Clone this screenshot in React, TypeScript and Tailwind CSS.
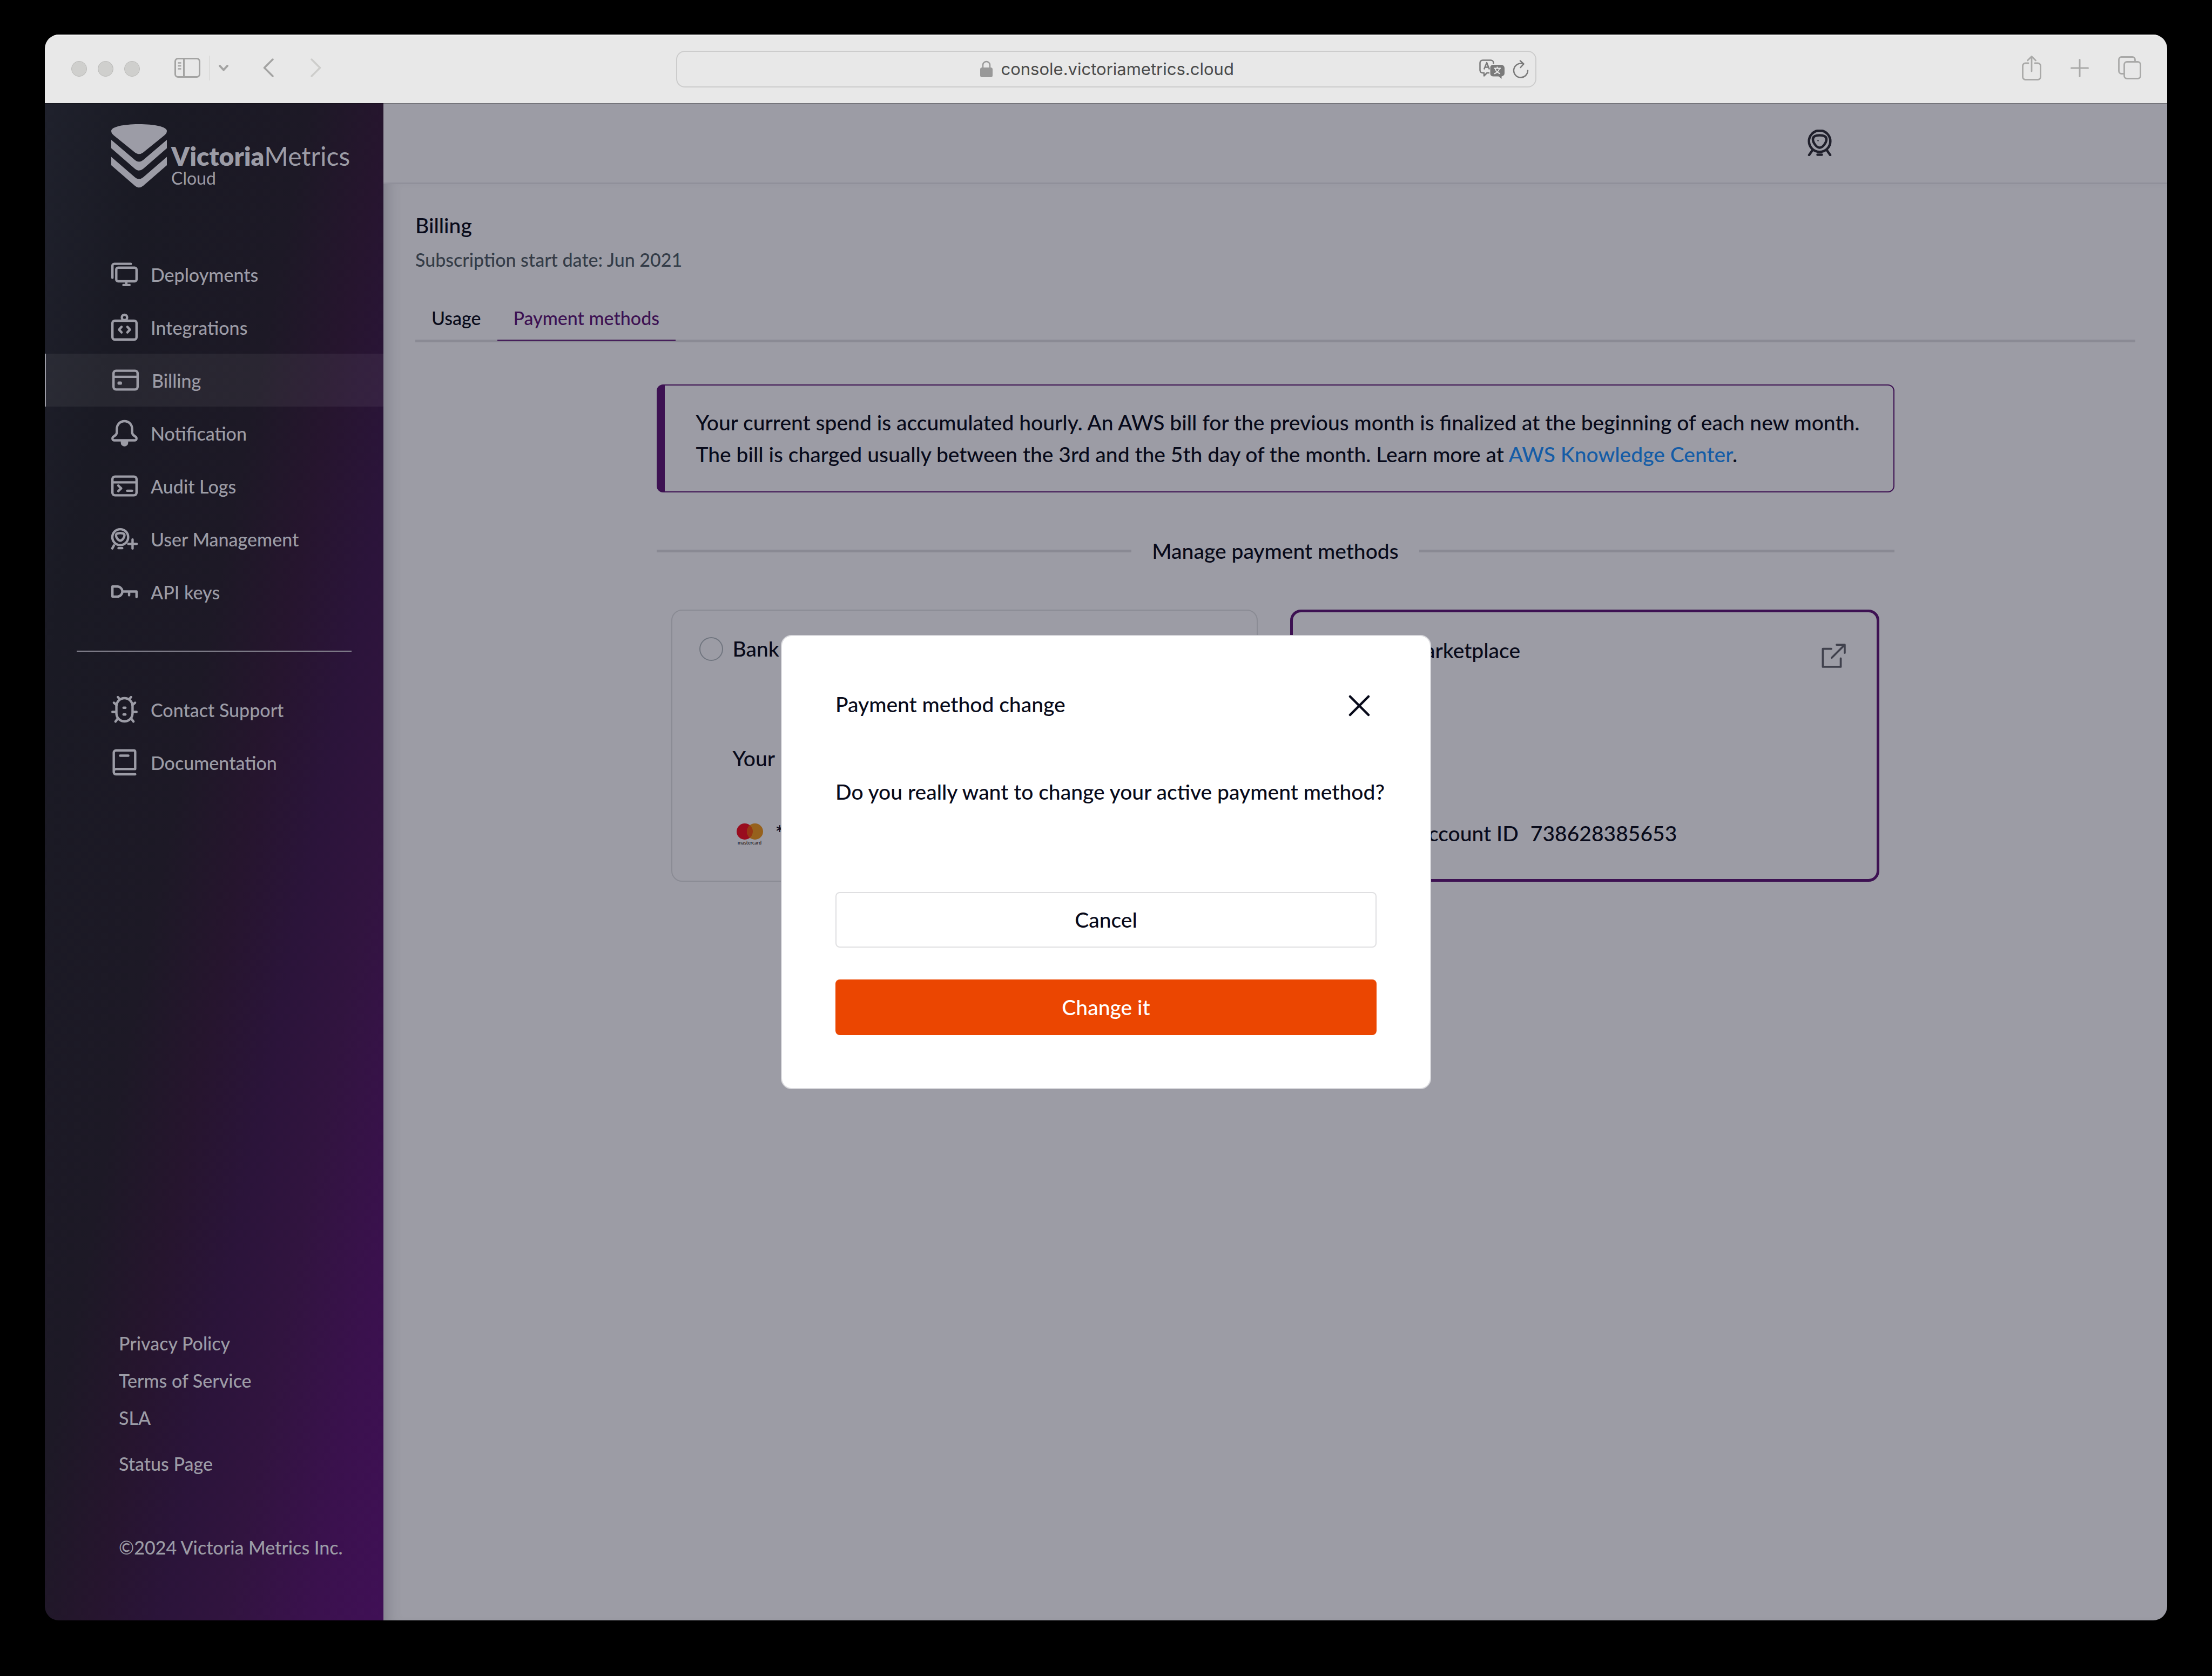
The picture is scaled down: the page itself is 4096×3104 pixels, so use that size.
import type { ReactNode } from "react";

function NavIcon({ children }: { children: ReactNode }) {
  return (
    <svg
      viewBox="0 0 20 20"
      className="size-[49px] shrink-0 overflow-visible"
      fill="none"
      stroke="currentColor"
      strokeWidth="1.8"
      strokeLinecap="round"
      strokeLinejoin="round"
      aria-hidden="true"
    >
      {children}
    </svg>
  );
}

const mainLinks = [
  {
    label: "Deployments",
    icon: (
      <>
        <path d="M.9 12.4V3.3A1.4 1.4 0 0 1 2.3 1.9H14.8" />
        <rect x="3.8" y="4.8" width="15.3" height="10.3" rx="1.4" />
        <path d="M11.4 15.4v2.4M9.2 17.9h4.6" />
      </>
    ),
  },
  {
    label: "Integrations",
    icon: (
      <>
        <rect x=".9" y="4.9" width="18.2" height="14.2" rx="1.7" />
        <circle cx="10" cy="2.4" r="2" />
        <path d="M7.8 9.5 5.9 11.6l1.9 2.1M12.2 9.5l1.9 2.1-1.9 2.1" />
      </>
    ),
  },
  {
    label: "Billing",
    active: true,
    icon: (
      <>
        <rect x=".9" y="2.7" width="18.2" height="14.2" rx="1.9" />
        <path d="M.9 7.3h18.2" />
        <rect x="3.9" y="10.8" width="3.4" height="2.5" rx=".9" fill="currentColor" stroke="none" />
      </>
    ),
  },
  {
    label: "Notification",
    icon: (
      <>
        <path d="M10 .8C6.6.8 4.2 3.4 4.2 6.8v2.6c0 2.2-2 2.5-3 3.6-.7.9-.2 2.3 1 2.3h15.6c1.2 0 1.7-1.4 1-2.3-1-1.1-3-1.4-3-3.6V6.8c0-3.4-2.4-6-5.8-6Z" />
        <path d="M7.2 15.8h5.6v1.3a2.8 2.8 0 0 1-5.6 0Z" fill="currentColor" stroke="none" />
      </>
    ),
  },
  {
    label: "Audit Logs",
    icon: (
      <>
        <rect x=".9" y="2.7" width="18.2" height="14.2" rx="1.9" />
        <path d="M.9 7.1h18.2M5.3 9.5l2.2 2.1-2.2 2.1M12 13.4h3.8" />
      </>
    ),
  },
  {
    label: "User Management",
    icon: (
      <>
        <circle cx="6.8" cy="8.5" r="6" />
        <path d="M6.8 5.4c1.7 0 3.2.3 3.2 1.6 0 1.6-1.6 4.1-3.2 4.1S3.6 8.6 3.6 7C3.6 5.7 5.1 5.4 6.8 5.4Z" />
        <path d="m2 14.8-1.2 2.2M5.5 16.8h2.8M16.1 10.3v6.8M12.9 13.6h6.3" />
      </>
    ),
  },
  {
    label: "API keys",
    icon: <path d="M.9 5.8h3.7a3.8 3.8 0 0 1 0 7.6H.9ZM8.6 9.6h10.5v4.2M13.5 9.6v2.8" />,
  },
];

const helpLinks = [
  {
    label: "Contact Support",
    icon: (
      <>
        <rect x="3.9" y="1.2" width="12.2" height="17.6" rx="6.1" />
        <path d="m5 .4 1.4 1.6M15 .4l-1.4 1.6M2 4.7l1.8 1.5M18 4.7l-1.8 1.5M.9 11.6h2.6M19.1 11.6h-2.6M3.2 18.9l1.5-2M16.8 18.9l-1.5-2M9.3 8.5h1.4M9.3 13.6h1.4" />
      </>
    ),
  },
  {
    label: "Documentation",
    icon: (
      <path d="M18.1 14.8V1.7a1 1 0 0 0-1-1H3.6A1.7 1.7 0 0 0 1.9 2.4v14.7a1.7 1.7 0 0 0 1.7 1.7h14.5M18.1 14.8H3.6a1.7 1.7 0 0 0-1.7 1.7M6.7 4.7h6.2" />
    ),
  },
];

type NavItem = { label: string; icon: ReactNode; active?: boolean };

function NavList({ items, label }: { items: NavItem[]; label: string }) {
  return (
    <nav aria-label={label} className="flex flex-col">
      {items.map((item) => (
        <a
          key={item.label}
          href="#"
          aria-current={item.active ? "page" : undefined}
          className={
            item.active
              ? "flex h-[98px] items-center gap-6 border-l-2 border-[#9c9ca6] bg-white/6 pl-[123px]"
              : "flex h-[98px] items-center gap-6 pl-[123px]"
          }
        >
          <NavIcon>{item.icon}</NavIcon>
          {item.label}
        </a>
      ))}
    </nav>
  );
}

function Toolbar() {
  return (
    <header className="relative z-10 grid h-[127px] grid-cols-[1fr_auto_1fr] items-center bg-[#e8e8e8] shadow-[0_2px_0_rgba(0,0,0,0.25),inset_0_2px_0_#f5f5f5]">
      <div className="flex items-center pl-[49px] text-[#a3a3a2]">
        <div className="flex gap-5">
          <span className="size-[29px] rounded-full border border-[#b9b9b7] bg-[#cfcfcd]" />
          <span className="size-[29px] rounded-full border border-[#b9b9b7] bg-[#cfcfcd]" />
          <span className="size-[29px] rounded-full border border-[#b9b9b7] bg-[#cfcfcd]" />
        </div>
        <div className="flex items-center pb-1">
          <button type="button" aria-label="Show sidebar" className="ml-16">
            <svg viewBox="0 0 48 37" className="h-[37px] w-12" fill="none" stroke="currentColor" strokeWidth="3">
              <rect x="1.5" y="1.5" width="45" height="34" rx="5" />
              <path d="M17.5 2v33" />
              <path d="M6.5 9.5h6M6.5 15h6M6.5 20.5h6" strokeWidth="2.5" />
            </svg>
          </button>
          <span className="ml-4 h-[46px] w-0.5 bg-[#dcdcdb]" />
          <button type="button" aria-label="Tab groups" className="ml-4">
            <svg viewBox="0 0 18 12" className="h-3 w-[18px]" fill="none" stroke="currentColor" strokeWidth="4" strokeLinecap="round" strokeLinejoin="round">
              <path d="m2 2 7 7.5L16 2" />
            </svg>
          </button>
          <button type="button" aria-label="Back" className="ml-16">
            <svg viewBox="0 0 20 35" className="h-[35px] w-5" fill="none" stroke="currentColor" strokeWidth="3.5" strokeLinecap="round" strokeLinejoin="round">
              <path d="M18 2 2.5 17.5 18 33" />
            </svg>
          </button>
          <button type="button" aria-label="Forward" className="ml-[68px] text-[#cdcdcb]">
            <svg viewBox="0 0 20 35" className="h-[35px] w-5" fill="none" stroke="currentColor" strokeWidth="3.5" strokeLinecap="round" strokeLinejoin="round">
              <path d="m2 2 15.5 15.5L2 33" />
            </svg>
          </button>
        </div>
      </div>

      <div className="relative flex h-[68px] w-[1593px] max-w-full items-center justify-center gap-4 rounded-2xl border-2 border-[#cccccc] pl-2">
        <svg viewBox="0 0 23 31" className="h-[31px] w-[23px] text-[#999999]" aria-hidden="true">
          <rect y="13" width="23" height="18" rx="3.5" fill="currentColor" />
          <path d="M5 14V8.5a6.5 6.5 0 0 1 13 0V14" fill="none" stroke="currentColor" strokeWidth="2.5" />
        </svg>
        <input
          type="text"
          aria-label="Address"
          defaultValue="console.victoriametrics.cloud"
          className="w-[436px] bg-transparent font-[Inter,sans-serif] text-[31px] leading-[40px] text-[#4a4a4a] outline-none"
        />
        <div className="absolute right-3 flex items-center gap-3.5 text-[#7a7a7a]">
          <button type="button" aria-label="Translate">
            <svg viewBox="0 0 48 36" className="h-9 w-12" fill="none" stroke="currentColor" strokeWidth="2.5" strokeLinejoin="round">
              <path d="M19 25h-4.500L9 30.500V25H6.500a5 5 0 0 1-5-5V6.500a5 5 0 0 1 5-5h15a5 5 0 0 1 5 5V8" />
              <path d="m9 18.500 5-12.500 5 12.500M10.800 14.500h6.400" />
              <path d="M25.500 10H41a6 6 0 0 1 6 6v9.500a6 6 0 0 1-5.500 6V36l-5.500-4.500H25.500a5 5 0 0 1-5-5V15a5 5 0 0 1 5-5Z" fill="currentColor" stroke="none" />
              <path d="M27 16.500h13M33.500 13.500v3M29.500 17c1 4 5 8 9.500 9.500M37.500 17c-1 4-5 8-9.500 9.500" stroke="#e8e8e8" strokeWidth="2" />
            </svg>
          </button>
          <button type="button" aria-label="Reload">
            <svg viewBox="0 0 30 34" className="h-[34px] w-[30px]" fill="none" stroke="currentColor" strokeWidth="2.5" strokeLinecap="round" strokeLinejoin="round">
              <path d="M19.5 7.3A13 13 0 1 0 28 19.5" />
              <path d="m14 1.5 6.5 6L14.5 14" />
            </svg>
          </button>
        </div>
      </div>

      <div className="flex items-center justify-end gap-[54px] pr-12 pb-1 text-[#a9a9a8]">
        <button type="button" aria-label="Share">
          <svg viewBox="0 0 36 46" className="h-[46px] w-9" fill="none" stroke="currentColor" strokeWidth="2.8" strokeLinecap="round" strokeLinejoin="round">
            <path d="M12 14H6.500a5 5 0 0 0-5 5v20.500a5 5 0 0 0 5 5h23a5 5 0 0 0 5-5V19a5 5 0 0 0-5-5H24" />
            <path d="M18 29V2M10.500 9 18 1.500 25.500 9" />
          </svg>
        </button>
        <button type="button" aria-label="New tab">
          <svg viewBox="0 0 34 34" className="size-[34px]" fill="none" stroke="currentColor" strokeWidth="3" strokeLinecap="round">
            <path d="M17 1.5v31M1.5 17h31" />
          </svg>
        </button>
        <button type="button" aria-label="Tab overview">
          <svg viewBox="0 0 43 43" className="size-[43px]" fill="none" stroke="currentColor" strokeWidth="2.8" strokeLinejoin="round">
            <rect x="11.5" y="10.5" width="30" height="31" rx="5" />
            <path d="M11 32.5H6.5a5 5 0 0 1-5-5v-21a5 5 0 0 1 5-5h20a5 5 0 0 1 5 5V10" />
          </svg>
        </button>
      </div>
    </header>
  );
}

function Sidebar() {
  return (
    <aside className="flex w-[627px] shrink-0 flex-col bg-[linear-gradient(101deg,#1f212c_0%,#1a1a24_18%,#1d1926_42%,#26152e_54%,#2b143a_65%,#31143f_75%,#3a114d_88%,#401056_100%)] text-[34px] leading-[51px] text-[#9c9ca6]">
      <div className="flex gap-2 pt-[39px] pl-[123px]">
        <svg viewBox="0 0 103 118" className="h-[118px] w-[103px]" fill="currentColor" aria-hidden="true">
          <path d="M0 12.500C0 4.500 24 0 51.500 0S103 4.500 103 12.500c0 3.500-2 6-5 8.500L59 52.500q-7.500 5.500-15 0L5 21C2 18.500 0 16 0 12.500Z" />
          <path d="M0 29l44 37.500q7.500 6 15 0L103 29v15.500L59 82.800q-7.500 6-15 0L0 44.500Z" />
          <path d="M0 60.500l44 38q7.500 6 15 0l44-38V76L59 114.300q-7.500 6-15 0L0 76Z" />
        </svg>
        <div className="flex flex-col pt-9 font-normal">
          <span className="text-[48px] leading-[46px]">
            <b className="font-extrabold">Victoria</b>Metrics
          </span>
          <span className="text-[32px] leading-[36px]">Cloud</span>
        </div>
      </div>
      <div className="mt-[111px]">
        <NavList items={mainLinks} label="Main" />
      </div>
      <hr className="mx-[59px] mt-[60px] mb-[58px] border-t-2 border-[#85838f]" />
      <NavList items={helpLinks} label="Help" />
      <div className="mt-auto flex flex-col items-start pb-[101px] pl-[137px] leading-[69px]">
        <a href="#">Privacy Policy</a>
        <a href="#">Terms of Service</a>
        <a href="#">SLA</a>
        <a href="#" className="mt-4">Status Page</a>
        <p className="mt-[86px]">©2024 Victoria Metrics Inc.</p>
      </div>
    </aside>
  );
}

function Mastercard() {
  return (
    <svg viewBox="0 0 62 46" className="h-[46px] w-[62px]" role="img" aria-label="mastercard">
      <circle cx="22" cy="19" r="15" fill="#990c1e" />
      <circle cx="41" cy="19" r="15" fill="#96611c" />
      <path d="M31.500 7.400a15 15 0 0 1 0 23.200 15 15 0 0 1 0-23.200Z" fill="#983614" />
      <text x="31" y="43" textAnchor="middle" fontSize="9" fill="#12131c" fontFamily="Lato, sans-serif">
        mastercard
      </text>
    </svg>
  );
}

function PaymentMethods() {
  return (
    <section className="mx-auto mt-[78px] w-full max-w-[2292px]">
      <div className="rounded-xl border-2 border-l-[15px] border-[#3d1152] py-[39px] pl-[58px] leading-[59px]">
        <p>
          Your current spend is accumulated hourly. An AWS bill for the previous month is finalized at the beginning of each new month.
          <br />
          The bill is charged usually between the 3rd and the 5th day of the month. Learn more at{" "}
          <a href="#" className="text-[#155ca6]">AWS Knowledge Center</a>.
        </p>
      </div>
      <div className="mt-[79px] flex items-center gap-[38px]">
        <span className="h-[5px] flex-1 bg-[#898993]" />
        <h2>Manage payment methods</h2>
        <span className="h-[5px] flex-1 bg-[#898993]" />
      </div>
      <div className="mx-[27px] mt-[79px] grid grid-cols-[1086fr_1091fr] gap-[60px]">
        <div className="flex min-h-[504px] flex-col rounded-[20px] border-2 border-[#8a8b94] px-[50px] pt-[41px] pb-[58px]">
          <label className="flex items-center gap-[18px]">
            <input type="radio" name="method" className="size-11 appearance-none rounded-full border-2 border-[#70757f]" />
            Bank card
          </label>
          <div className="mt-auto flex flex-col gap-20 pl-[62px]">
            <p className="flex gap-4">
              <span>Your</span>
              <span>card</span>
            </p>
            <p className="flex items-center gap-[17px]">
              <Mastercard />
              ****
            </p>
          </div>
        </div>
        <div className="flex min-h-[504px] flex-col justify-between rounded-[20px] border-5 border-[#3d1152] px-[50px] pt-[41px] pb-[55px]">
          <div className="flex items-start justify-between">
            <label className="flex items-center gap-[18px]">
              <input type="radio" name="method" defaultChecked className="size-11 appearance-none rounded-full border-[12px] border-[#3d1152]" />
              AWS Marketplace
            </label>
            <a href="#" aria-label="Open AWS Marketplace" className="mt-2.5 text-[#40414d]">
              <svg viewBox="0 0 24 24" className="size-[59px]" fill="none" stroke="currentColor" strokeWidth="1.5" strokeLinejoin="round" strokeLinecap="round">
                <path d="M10.200 6.800H3.800v13.500h13.500v-6.300" />
                <path d="M14.200 3.700h6.100v6.100M20 4l-9.500 9.500" />
              </svg>
            </a>
          </div>
          <p className="flex gap-[22px] pl-20">
            <span>AWS Account ID</span>
            <span>738628385653</span>
          </p>
        </div>
      </div>
    </section>
  );
}

function ConfirmDialog() {
  return (
    <div className="absolute inset-0 flex items-center justify-center">
      <div
        role="dialog"
        aria-modal="true"
        aria-labelledby="dialog-title"
        className="flex w-[1204px] flex-col rounded-[20px] border-2 border-[#d9d9dd] bg-white px-[99px] pt-[97px] pb-[98px]"
      >
        <div className="flex items-start justify-between">
          <h2 id="dialog-title">Payment method change</h2>
          <button type="button" aria-label="Close" className="mt-3 mr-3">
            <svg viewBox="0 0 40 40" className="size-10" fill="none" stroke="currentColor" strokeWidth="4.5" strokeLinecap="round">
              <path d="m3 3 34 34M37 3 3 37" />
            </svg>
          </button>
        </div>
        <p className="mt-[103px] whitespace-nowrap">Do you really want to change your active payment method?</p>
        <button type="button" className="mt-[156px] h-[103px] rounded-lg border-2 border-[#dfdfe1]">
          Cancel
        </button>
        <button type="button" className="mt-[59px] h-[103px] rounded-lg bg-[#eb4601] text-white">
          Change it
        </button>
      </div>
    </div>
  );
}

function UserIcon() {
  return (
    <svg viewBox="0 0 45 49" className="h-[49px] w-[45px]" fill="none" stroke="currentColor" strokeWidth="4.5" strokeLinecap="round" strokeLinejoin="round">
      <circle cx="22.5" cy="21.5" r="19.8" />
      <path d="M22.500 10.500c8 0 12.500 2.500 12.500 7.500 0 6-6.500 15.500-12.500 15.500S10 24 10 18c0-5 4.500-7.500 12.500-7.500Z" />
      <path d="m9 38.500-6 8.500M36 38.500l6 8.500M18.500 46.500h8" />
      <circle cx="19.5" cy="20.5" r="1.2" fill="currentColor" stroke="none" />
    </svg>
  );
}

export default function App() {
  return (
    <div className="flex min-h-screen flex-col bg-black px-[83px] pt-16 pb-[103px] font-[Lato,sans-serif]">
      <div className="flex flex-1 flex-col overflow-hidden rounded-[26px]">
        <Toolbar />
        <div className="relative flex flex-1 text-[39px] leading-[59px] font-medium text-[#080a1a]">
          <Sidebar />
          <main className="flex flex-1 flex-col bg-[#9c9ca5]">
            <div className="flex h-[150px] items-center justify-end border-b-[3px] border-[#90909a] pr-[621px]">
              <button type="button" aria-label="Account" className="text-[#20202c]">
                <UserIcon />
              </button>
            </div>
            <div className="flex-1 px-[59px] pt-[47px] shadow-[inset_26px_0_26px_-20px_rgba(60,62,75,0.3)]">
              <h1>Billing</h1>
              <p className="mt-2 text-[34px] leading-[51px] text-[#343c48]">Subscription start date: Jun 2021</p>
              <div role="tablist" className="mt-[43px] flex border-b-5 border-[#8a8a94] text-[34px] leading-[51px]">
                <button type="button" role="tab" aria-selected="false" className="px-[30px] pt-3.5 pb-[15px]">
                  Usage
                </button>
                <button
                  type="button"
                  role="tab"
                  aria-selected="true"
                  className="-mb-0.5 border-b-2 border-[#3d1152] px-[30px] pt-3.5 pb-[15px] text-[#3d1152]"
                >
                  Payment methods
                </button>
              </div>
              <PaymentMethods />
            </div>
          </main>
          <ConfirmDialog />
        </div>
      </div>
    </div>
  );
}
